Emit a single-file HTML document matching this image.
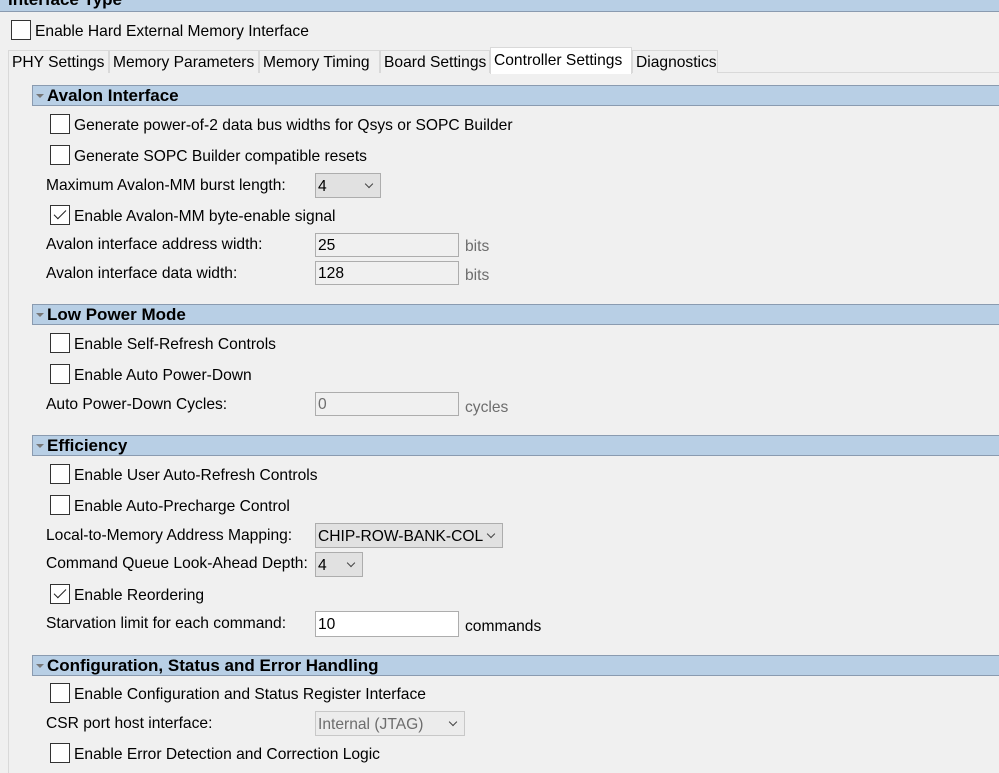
<!DOCTYPE html>
<html><head><style>
body{margin:0;width:999px;height:770px;overflow:hidden;background:#f0f0f0;font-family:"Liberation Sans",sans-serif;font-size:15.6px;color:#000;position:relative}
.a{position:absolute;white-space:nowrap}
.t{margin-top:2px}
.cb{position:absolute;width:18px;height:18px;border:1px solid #333;background:#fff}
.hd{position:absolute;left:32px;width:967px;background:#b8cfe5;border:1px solid #8a9bb0;border-right:none;font-weight:bold;font-size:17px;line-height:20px;padding-left:14px;box-sizing:border-box;height:21px}
.hd:before{content:"";position:absolute;left:3px;top:8px;border-left:4px solid transparent;border-right:4px solid transparent;border-top:4px solid #777}
.in{position:absolute;height:24px;border:1px solid #adadad;box-sizing:border-box;line-height:24px;padding-left:2px;background:#f0f0f0}
.sel{position:absolute;height:25px;border:1px solid #adadad;box-sizing:border-box;background:#e1e1e1;line-height:25px;padding-left:2px}
.sel:after{content:"";position:absolute;right:8px;top:7px;width:5px;height:5px;border-right:1px solid #444;border-bottom:1px solid #444;transform:rotate(45deg)}
.tab{position:absolute;top:50px;height:23px;border:1px solid #d9d9d9;border-bottom:none;line-height:24px;padding:0 3px;box-sizing:border-box;background:#f0f0f0;white-space:nowrap;overflow:hidden}
.chk:after{content:"";position:absolute;left:6px;top:1px;width:5px;height:11px;border-right:1.5px solid #222;border-bottom:1.5px solid #222;transform:rotate(45deg)}
.g{color:#6d6d6d}
</style></head><body>
<div class="a" style="left:0;top:0;width:999px;height:11px;background:#b8cfe5;border-bottom:1px solid #8a9bb0;overflow:hidden"><div style="position:absolute;left:8px;top:-10px;font-weight:bold;font-size:17px">Interface Type</div></div>
<div class="cb" style="left:11px;top:20px"></div><div class="a t" style="left:35px;top:21px">Enable Hard External Memory Interface</div>
<div class="a" style="left:8px;top:72px;width:991px;height:700px;border-left:1px solid #d9d9d9;border-top:1px solid #d9d9d9"></div>
<div class="tab" style="left:8px;width:101px">PHY Settings</div>
<div class="tab" style="left:109px;width:150px">Memory Parameters</div>
<div class="tab" style="left:259px;width:121px">Memory Timing</div>
<div class="tab" style="left:380px;width:110px">Board Settings</div>
<div class="tab" style="left:490px;width:142px;top:47px;height:27px;background:#fff;line-height:26px">Controller Settings</div>
<div class="tab" style="left:632px;width:86px">Diagnostics</div>

<div class="hd" style="top:85px">Avalon Interface</div>
<div class="cb" style="left:50px;top:114px"></div><div class="a t" style="left:74px;top:115px">Generate power-of-2 data bus widths for Qsys or SOPC Builder</div>
<div class="cb" style="left:50px;top:145px"></div><div class="a t" style="left:74px;top:146px">Generate SOPC Builder compatible resets</div>
<div class="a t" style="left:46px;top:175px">Maximum Avalon-MM burst length:</div>
<div class="sel" style="left:315px;top:173px;width:66px">4</div>
<div class="cb chk" style="left:50px;top:205px"></div><div class="a t" style="left:74px;top:206px">Enable Avalon-MM byte-enable signal</div>
<div class="a t" style="left:46px;top:234px">Avalon interface address width:</div>
<div class="in" style="left:315px;top:233px;width:144px">25</div><div class="a g t" style="left:465px;top:236px">bits</div>
<div class="a t" style="left:46px;top:263px">Avalon interface data width:</div>
<div class="in" style="left:315px;top:261px;width:144px">128</div><div class="a g t" style="left:465px;top:265px">bits</div>

<div class="hd" style="top:304px">Low Power Mode</div>
<div class="cb" style="left:50px;top:333px"></div><div class="a t" style="left:74px;top:334px">Enable Self-Refresh Controls</div>
<div class="cb" style="left:50px;top:364px"></div><div class="a t" style="left:74px;top:365px">Enable Auto Power-Down</div>
<div class="a t" style="left:46px;top:394px">Auto Power-Down Cycles:</div>
<div class="in g" style="left:315px;top:392px;width:144px">0</div><div class="a g t" style="left:465px;top:397px">cycles</div>

<div class="hd" style="top:435px">Efficiency</div>
<div class="cb" style="left:50px;top:464px"></div><div class="a t" style="left:74px;top:465px">Enable User Auto-Refresh Controls</div>
<div class="cb" style="left:50px;top:495px"></div><div class="a t" style="left:74px;top:496px">Enable Auto-Precharge Control</div>
<div class="a t" style="left:46px;top:525px">Local-to-Memory Address Mapping:</div>
<div class="sel" style="left:315px;top:523px;width:188px">CHIP-ROW-BANK-COL</div>
<div class="a t" style="left:46px;top:553px">Command Queue Look-Ahead Depth:</div>
<div class="sel" style="left:315px;top:552px;width:48px">4</div>
<div class="cb chk" style="left:50px;top:584px"></div><div class="a t" style="left:74px;top:585px">Enable Reordering</div>
<div class="a t" style="left:46px;top:613px">Starvation limit for each command:</div>
<div class="in" style="left:315px;top:611px;width:144px;background:#fff;height:26px;line-height:26px">10</div><div class="a t" style="left:465px;top:616px">commands</div>

<div class="hd" style="top:655px">Configuration, Status and Error Handling</div>
<div class="cb" style="left:50px;top:683px"></div><div class="a t" style="left:74px;top:684px">Enable Configuration and Status Register Interface</div>
<div class="a t" style="left:46px;top:713px">CSR port host interface:</div>
<div class="sel g" style="left:315px;top:711px;width:150px;background:#ececec;border-color:#c8c8c8">Internal (JTAG)</div>
<div class="cb" style="left:50px;top:743px"></div><div class="a t" style="left:74px;top:744px">Enable Error Detection and Correction Logic</div>
</body></html>
